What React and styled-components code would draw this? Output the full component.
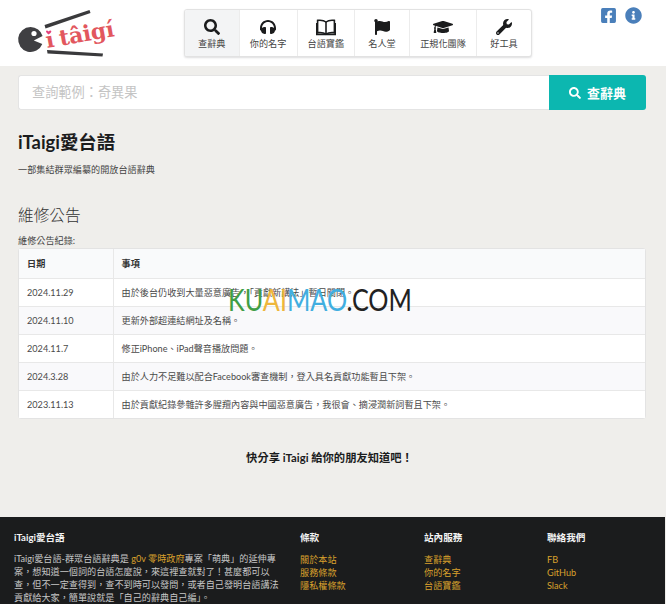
import React from "react";
import styled, { createGlobalStyle } from "styled-components";
import { FaSearch, FaHeadphones, FaFlag, FaGraduationCap, FaWrench, FaFacebookSquare, FaInfoCircle } from "react-icons/fa";

const FONT = `Lato, "Noto Sans CJK TC", "Liberation Sans", sans-serif`;

const Global = createGlobalStyle`
  html, body { margin: 0; padding: 0; background: #efeeeb; }
  body { font-family: ${FONT}; color: #1b1c1d; }
  * { box-sizing: border-box; }
`;

const Page = styled.div`
  position: relative;
  width: 666px;
  height: 604px;
  overflow: hidden;
  background: #efeeeb;
`;

const Header = styled.header`
  height: 66px;
  background: #fff;
  display: grid;
  grid-template-columns: 184px 348px 1fr;
  align-items: start;
`;

const LogoBox = styled.div`
  padding: 7px 0 0 16px;
`;

const Nav = styled.nav`
  margin-top: 9px;
  height: 48px;
  display: flex;
  background: #fff;
  border: 1px solid #e2e2e2;
  border-radius: 3px;
  box-shadow: 0 1px 2px rgba(34, 36, 38, 0.15);
  overflow: hidden;
`;

const NavItem = styled.a`
  width: ${(p) => p.$w}px;
  flex: none;
  display: flex;
  flex-direction: column;
  align-items: center;
  padding-top: 8px;
  background: ${(p) => (p.$active ? "#f3f4f5" : "transparent")};
  border-right: ${(p) => (p.$last ? "none" : "1px solid #ececec")};
  color: #1b1c1d;
`;

const NavIcon = styled.span`
  height: 18px;
  font-size: 16px;
  line-height: 18px;
  display: flex;
  align-items: center;
  justify-content: center;
`;

const NavLabel = styled.span`
  margin-top: 2px;
  font-size: 9.14px;
  line-height: 12px;
  white-space: nowrap;
  color: #444;
`;

const Social = styled.div`
  display: flex;
  gap: 8px;
  justify-content: flex-end;
  padding: 7px 24.5px 0 0;
  color: #4a7fba;
  font-size: 17px;
  line-height: 17px;
`;

const SearchRow = styled.form`
  margin: 9px 20px 0 18px;
  height: 35px;
  display: flex;
`;

const SearchInput = styled.div`
  flex: 1;
  background: #fff;
  border: 1px solid #e4e4e4;
  border-right: none;
  border-radius: 3px 0 0 3px;
  padding-left: 13px;
  font-size: 13.2px;
  line-height: 33px;
  color: #c4c4c4;
`;

const SearchButton = styled.div`
  width: 97px;
  background: #00b5ad;
  border-radius: 0 3px 3px 0;
  color: #fff;
  display: flex;
  align-items: center;
  justify-content: center;
  gap: 6px;
  font-size: 13px;
  font-weight: 700;
  opacity: 0.95;
`;

const Main = styled.main`
  padding: 17px 20px 0 18px;
`;

const Title = styled.h1`
  margin: 0;
  font-size: 18.4px;
  line-height: 30px;
  font-weight: 700;
  color: #1b1c1d;
`;

const Subtitle = styled.p`
  margin: 6px 0 0;
  font-size: 9.14px;
  line-height: 14px;
  color: #444;
`;

const Section = styled.h2`
  margin: 26px 0 0;
  font-size: 15.7px;
  line-height: 24px;
  font-weight: 300;
  color: #333;
`;

const Caption = styled.div`
  margin-top: 7px;
  font-size: 9.14px;
  line-height: 13px;
  color: #444;
`;

const Table = styled.table`
  width: 628px;
  margin-top: 1px;
  border-collapse: separate;
  border-spacing: 0;
  background: #fff;
  border: 1px solid #e3e3e3;
  border-radius: 3px;
  font-size: 9.14px;
  color: #4a4a4a;
`;

const Th = styled.th`
  height: 28.6px;
  padding: 0 0 0 8px;
  text-align: left;
  font-weight: 700;
  background: #f9fafb;
  border-left: ${(p) => (p.$first ? "none" : "1px solid #e8e8e8")};
  width: ${(p) => (p.$first ? "93.5px" : "auto")};
  color: #333;
`;

const Tr = styled.tr`
  background: ${(p) => (p.$odd ? "#f9f9fb" : "#fff")};
`;

const Td = styled.td`
  height: 28px;
  padding: 0 0 0 8px;
  border-top: 1px solid #e8e8e8;
  border-left: ${(p) => (p.$first ? "none" : "1px solid #e8e8e8")};
`;

const Share = styled.div`
  margin-top: 31px;
  padding-right: 5px;
  text-align: center;
  font-size: 11.3px;
  line-height: 16px;
  font-weight: 700;
  color: #1b1c1d;
`;

const Footer = styled.footer`
  position: absolute;
  left: 0;
  right: 1.5px;
  top: 517px;
  height: 100px;
  background: #1b1c1d;
  display: grid;
  grid-template-columns: 286px 124px 123px 1fr;
  padding: 14px 0 0 14px;
  color: #fff;
`;

const FootTitle = styled.h4`
  margin: 0 0 8px;
  font-size: 9.6px;
  line-height: 14px;
  font-weight: 700;
  color: #f4f4f4;
`;

const FootText = styled.p`
  margin: 0;
  width: 267px;
  font-size: 9.14px;
  line-height: 12.9px;
  color: #c6c6c6;
`;

const FootLink = styled.a`
  display: block;
  font-size: 9.14px;
  line-height: 13px;
  color: #d9a02c;
`;

const InlineLink = styled.a`
  color: #d9a02c;
`;

const Watermark = styled.div`
  position: absolute;
  left: 228px;
  top: 281px;
  font-family: Lato, "Liberation Sans", sans-serif;
  font-size: 30px;
  line-height: 36px;
  font-weight: 400;
  white-space: nowrap;
  transform: scaleX(0.84);
  transform-origin: left center;
`;

const Mark = styled.span`
  color: ${(p) => p.$c};
`;

const Logo = () => (
  <svg width="108" height="54" viewBox="0 0 108 54" style={{ display: "block" }}>
    <path d="M28.5 18 L73.5 3 L74.5 6 L29.5 21.5 Z" fill="#3a3a3c" />
    <path d="M31 43 L87 46.5 L86.5 49.5 L31.5 46.5 Z" fill="#3a3a3c" />
    <path d="M14.5 20 a12.5 12.5 0 1 0 11.8 17 l-8.5 -3.5 l8.8 -4.4 A12.5 12.5 0 0 0 14.5 20 Z" fill="#3f3f42" />
    <circle cx="18" cy="26.5" r="2.6" fill="#fff" />
    <path d="M32.5 24.5 c-1.6 -2 -3.6 -0.6 -1.6 1.5 l1.6 1.6 l2 -1.6 c2 -2 0 -3.5 -2 -1.5 Z" fill="#e4407b" />
    <text x="31" y="41" transform="rotate(-10 31 41)" fontFamily="'DejaVu Serif', serif" fontWeight="700" fontSize="22" letterSpacing="-0.2" wordSpacing="-2" fill="#e2575e">ı tâigí</text>
  </svg>
);

const BookIcon = () => (
  <svg width="20" height="17" viewBox="0 0 20 17" fill="none" stroke="#1b1c1d" strokeWidth="1.6">
    <path d="M10 3 C8 1.4 5 1 1.6 1.4 V13.6 C5 13.2 8 13.6 10 15.2 C12 13.6 15 13.2 18.4 13.6 V1.4 C15 1 12 1.4 10 3 Z" />
    <path d="M10 3 V15" />
    <path d="M0.8 4 V15.4 H19.2 V4" />
  </svg>
);

const navItems = [
  { w: 54.5, label: "查辭典", icon: <FaSearch />, active: true },
  { w: 58, label: "你的名字", icon: <FaHeadphones /> },
  { w: 57.5, label: "台語寶鑑", icon: <BookIcon /> },
  { w: 55, label: "名人堂", icon: <FaFlag /> },
  { w: 67, label: "正規化團隊", icon: <FaGraduationCap style={{ fontSize: 20 }} /> },
  { w: 54, label: "好工具", icon: <FaWrench />, last: true },
];

const rows = [
  ["2024.11.29", "由於後台仍收到大量惡意廣告，「貢獻新講法」暫日關閉。"],
  ["2024.11.10", "更新外部超連結網址及名稱。"],
  ["2024.11.7", "修正iPhone、iPad聲音播放問題。"],
  ["2024.3.28", "由於人力不足難以配合Facebook審查機制，登入具名貢獻功能暫且下架。"],
  ["2023.11.13", "由於貢獻紀錄參雜許多腥羶內容與中國惡意廣告，我很會、摘浸潤新詞暫且下架。"],
];

const foots = [
  { t: "條款", l: ["關於本站", "服務條款", "隱私權條款"] },
  { t: "站內服務", l: ["查辭典", "你的名字", "台語寶鑑"] },
  { t: "聯絡我們", l: ["FB", "GitHub", "Slack"] },
];

const wm = [["KU", "#3f9e46"], ["AI", "#eeb63c"], ["MAO", "#41aee0"], [".COM", "#222"]];

export default function App() {
  return (
    <Page>
      <Global />
      <Header>
        <LogoBox><Logo /></LogoBox>
        <Nav>
          {navItems.map((n) => (
            <NavItem key={n.label} $w={n.w} $active={n.active} $last={n.last}>
              <NavIcon>{n.icon}</NavIcon>
              <NavLabel>{n.label}</NavLabel>
            </NavItem>
          ))}
        </Nav>
        <Social>
          <FaFacebookSquare />
          <FaInfoCircle />
        </Social>
      </Header>
      <SearchRow>
        <SearchInput>查詢範例：奇異果</SearchInput>
        <SearchButton><FaSearch style={{ fontSize: 12 }} />查辭典</SearchButton>
      </SearchRow>
      <Main>
        <Title>iTaigi愛台語</Title>
        <Subtitle>一部集結群眾編纂的開放台語辭典</Subtitle>
        <Section>維修公告</Section>
        <Caption>維修公告紀錄:</Caption>
        <Table>
          <thead>
            <tr><Th $first>日期</Th><Th>事項</Th></tr>
          </thead>
          <tbody>
            {rows.map((r, i) => (
              <Tr key={r[0]} $odd={i % 2 === 1}>
                <Td $first>{r[0]}</Td>
                <Td>{r[1]}</Td>
              </Tr>
            ))}
          </tbody>
        </Table>
        <Share>快分享 iTaigi 給你的朋友知道吧！</Share>
      </Main>
      <Footer>
        <div>
          <FootTitle>iTaigi愛台語</FootTitle>
          <FootText>
            iTaigi愛台語-群眾台語辭典是 <InlineLink>g0v 零時政府</InlineLink>專案「萌典」的延伸專案，想知道一個詞的台語怎麼說，來這裡查就對了！甚麼都可以查，但不一定查得到，查不到時可以發問，或者自己發明台語講法貢獻給大家，簡單說就是「自己的辭典自己編」。
          </FootText>
        </div>
        {foots.map((f) => (
          <div key={f.t}>
            <FootTitle>{f.t}</FootTitle>
            {f.l.map((x) => <FootLink key={x}>{x}</FootLink>)}
          </div>
        ))}
      </Footer>
      <Watermark>
        {wm.map(([t, c]) => <Mark key={t} $c={c}>{t}</Mark>)}
      </Watermark>
    </Page>
  );
}
